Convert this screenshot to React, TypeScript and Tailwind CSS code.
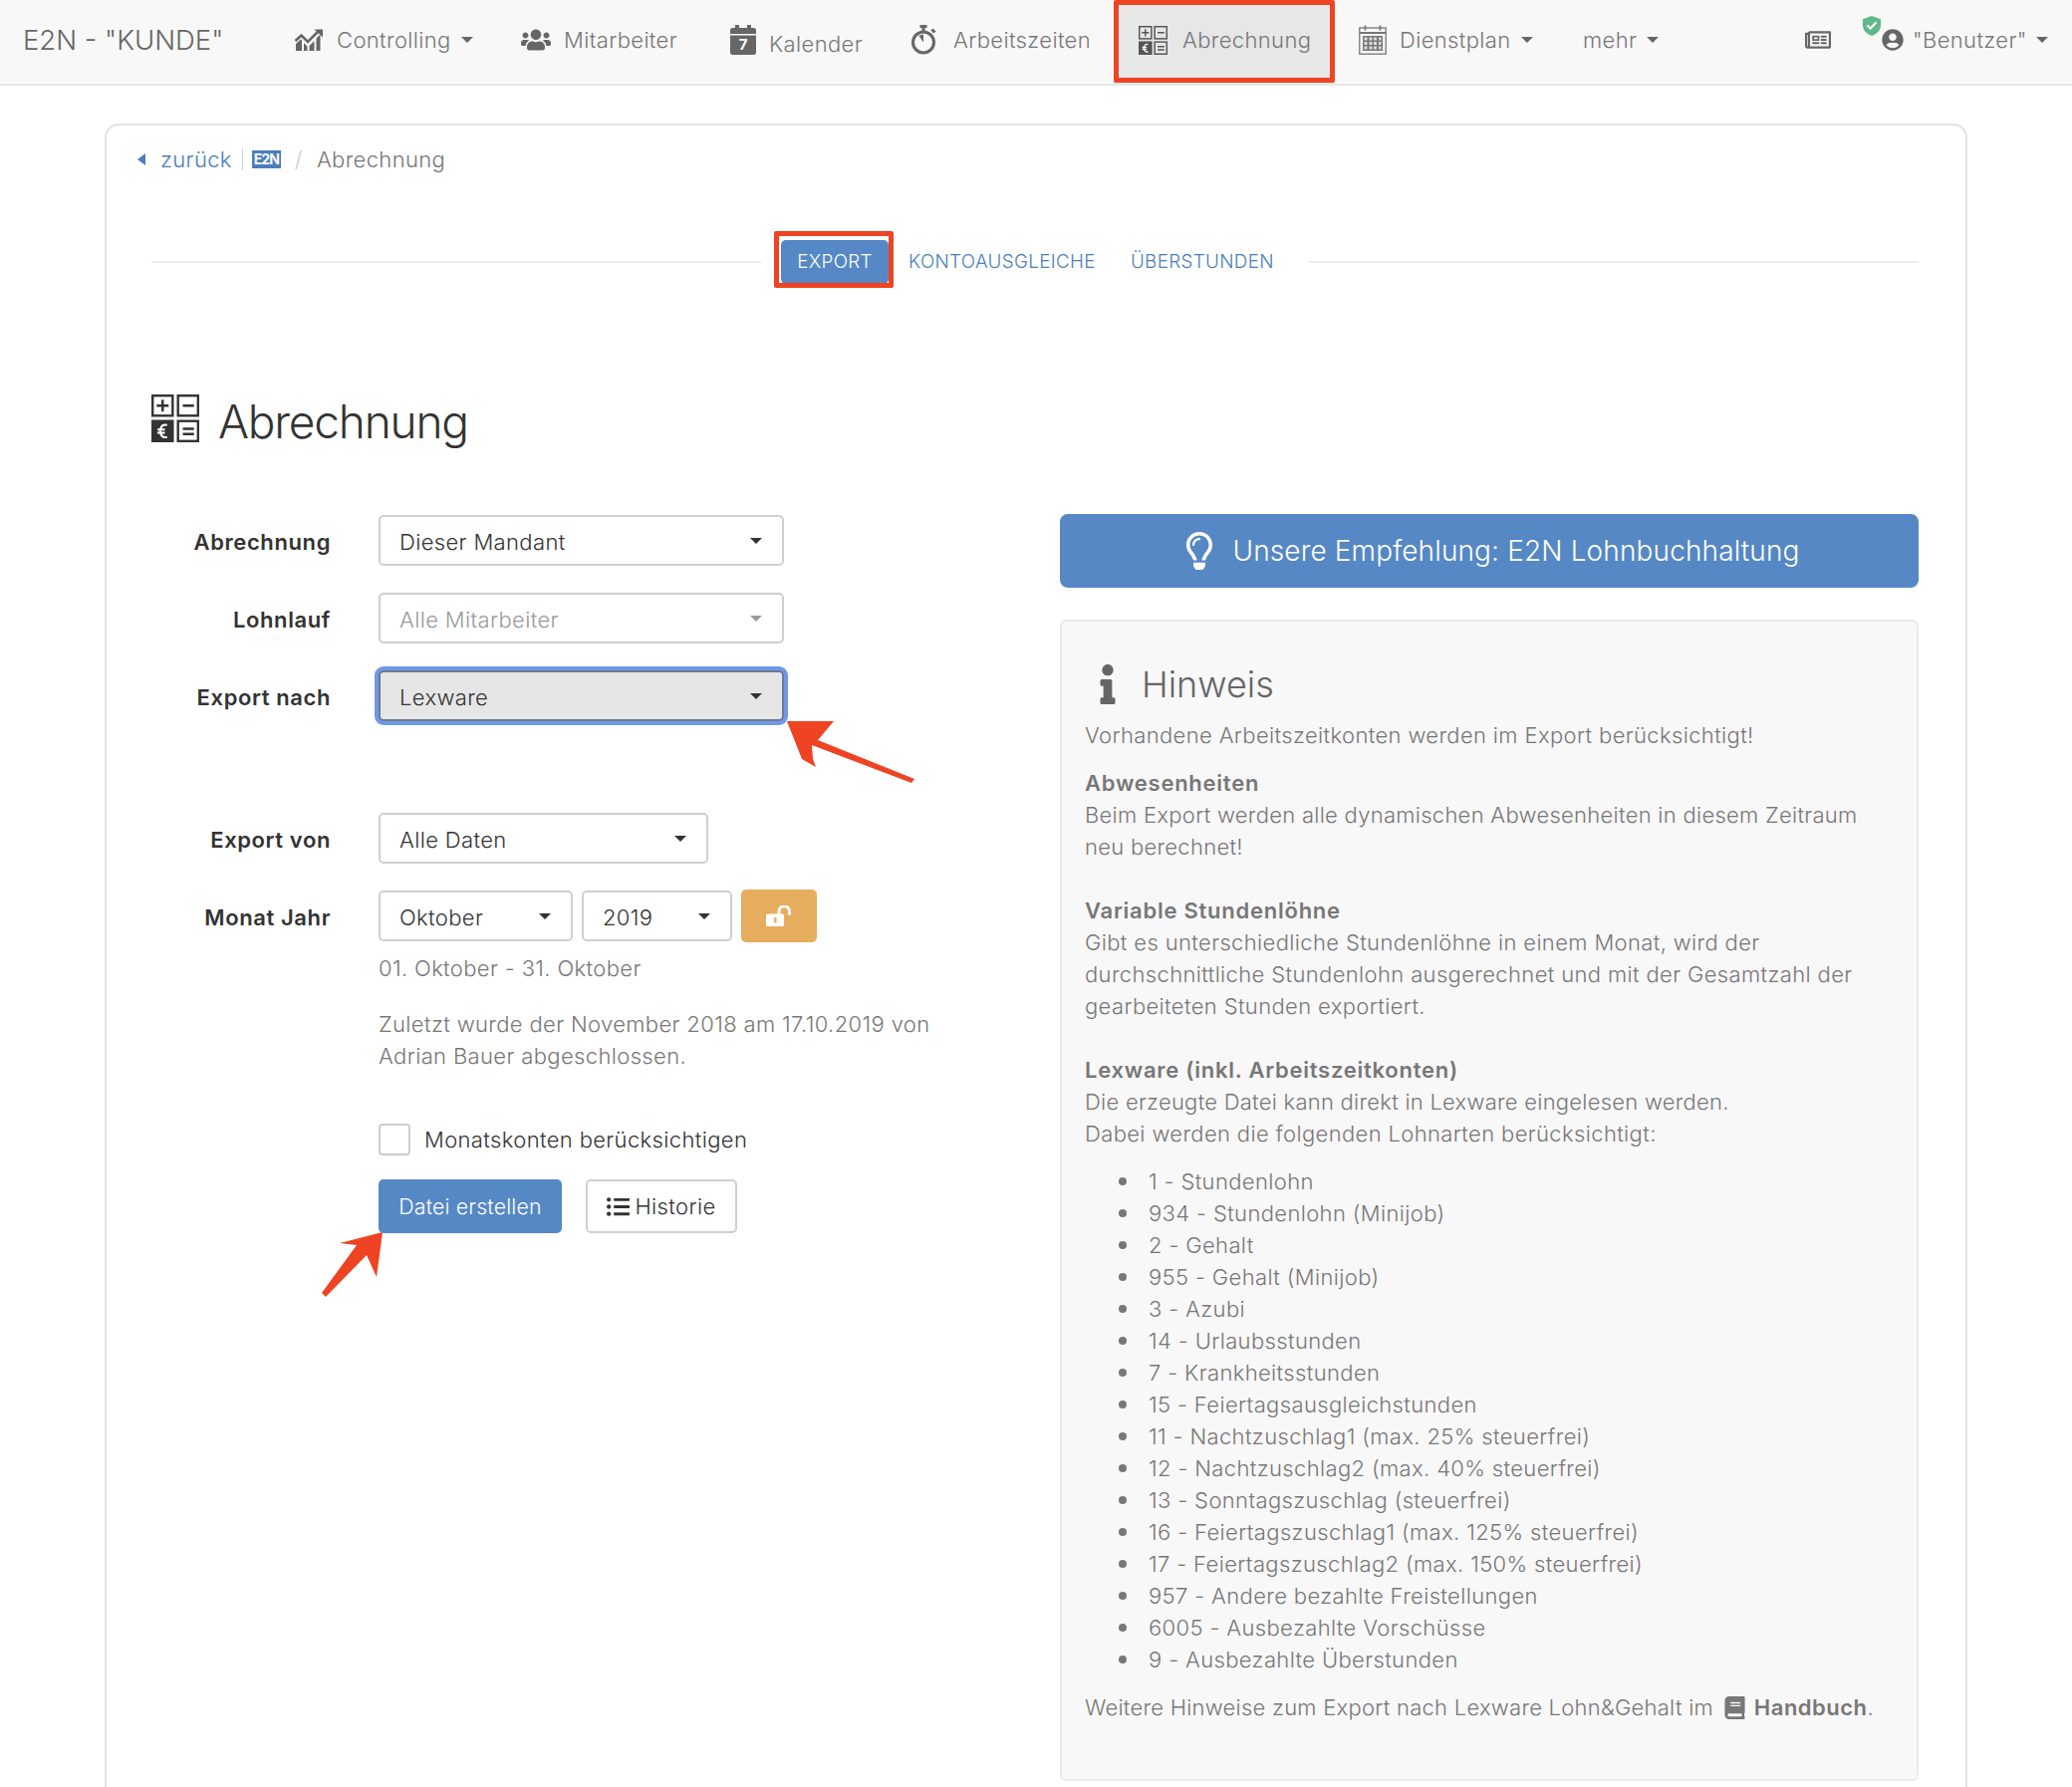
import React from "react";
import { FaUsers, FaRegNewspaper, FaUserCircle, FaRegLightbulb, FaInfo, FaBook, FaListUl } from "react-icons/fa";

const Caret = ({ c = "border-t-[#666]", s = "" }: { c?: string; s?: string }) => (
  <span className={`inline-block w-0 h-0 border-x-[6px] border-x-transparent border-t-[6px] ${c} ${s}`} />
);

const CalcIcon = ({ size, color = "#555" }: { size: number; color?: string }) => (
  <svg width={size} height={size} viewBox="0 0 32 32" fill="none">
    <g stroke={color} strokeWidth="1.6">
      <rect x="0.8" y="0.8" width="13.4" height="13.4" />
      <rect x="17.8" y="0.8" width="13.4" height="13.4" />
      <rect x="17.8" y="17.8" width="13.4" height="13.4" />
    </g>
    <rect x="0" y="17" width="15" height="15" fill={color} />
    <path d="M7.5 3.500v8M3.500 7.500h8M21 7.500h7.500M21 23h7.500M21 26.500h7.500" stroke={color} strokeWidth="1.6" />
    <path d="M10.500 20.500c-2.800-.8-4.600 1-4.600 4s1.800 4.800 4.600 4M4 23.500h5M4 25.700h5" stroke="#fff" strokeWidth="1.4" fill="none" />
  </svg>
);

const ChartIcon = () => (
  <svg width="30" height="30" viewBox="0 0 30 30" fill="#666">
    <path d="M2 26V19l5-4.500 1 1V26zM10 26V18l3.500 3.500V26zM15.500 26v-5l5-5V26zM22.500 26V13.500l4-4V26z" />
    <path d="M1.500 16 7.500 10.500 14 17 24.500 6.500" stroke="#666" strokeWidth="2.6" fill="none" />
    <path d="M20.500 4.500H29V12.500z" />
  </svg>
);

const CalendarSeven = () => (
  <span className="relative block w-[26px] h-[30px]">
    <svg width="26" height="30" viewBox="0 0 26 30" fill="#666" className="block">
      <rect x="0" y="3" width="26" height="27" rx="2.500" />
      <rect x="5" y="0" width="4" height="6" />
      <rect x="17" y="0" width="4" height="6" />
      <rect x="0" y="9" width="26" height="1.500" fill="#f8f8f8" />
    </svg>
    <span className="absolute left-0 right-0 top-[11px] text-center text-[15px] leading-[17px] font-bold text-white tracking-normal">7</span>
  </span>
);

const StopwatchIcon = () => (
  <svg width="25" height="30" viewBox="0 0 25 30" fill="none" stroke="#666">
    <circle cx="12" cy="17.500" r="10.500" strokeWidth="3" />
    <path d="M12 17.500V9.500A8 8 0 0 0 7.500 11z" fill="#666" stroke="none" />
    <path d="M8.500 1.500h7M12 1.500v5" strokeWidth="3" />
    <path d="m20.500 4.500 3 3" strokeWidth="3" />
  </svg>
);

const GridCalendarIcon = () => (
  <svg width="28" height="30" viewBox="0 0 28 30" fill="none" stroke="#777" strokeWidth="1.300">
    <rect x="0.800" y="3" width="26.400" height="26.200" />
    <path d="M0.800 8h26.400M6.500 0.500v5M21.500 0.500v5" strokeWidth="1.800" />
    <rect x="4" y="11" width="20" height="15" fill="#777" stroke="none" />
    <path d="M5.500 12.500h3v3h-3zM10.500 12.500h3v3h-3zM15 12.500h3v3h-3zM20 12.500h2.500v3H20zM5.500 17h3v3h-3zM10.500 17h3v3h-3zM15 17h3v3h-3zM20 17h2.500v3H20zM5.500 21.500h3v3h-3zM10.500 21.500h3v3h-3zM15 21.500h3v3h-3zM20 21.500h2.500v3H20z" fill="#ddd" stroke="none" />
  </svg>
);

const ShieldIcon = () => (
  <svg width="18" height="20" viewBox="0 0 18 20">
    <path d="M9 0 18 3.200v6.300c0 5-3.800 8.500-9 10.500C3.800 18 0 14.500 0 9.500V3.200z" fill="#5fb98a" />
    <path d="m4.500 9.500 3.200 3 5.800-6" stroke="#fff" strokeWidth="2.200" fill="none" />
  </svg>
);

const OpenLockIcon = () => (
  <svg width="26" height="21" viewBox="0 0 26 21">
    <rect x="0" y="8.500" width="18" height="12.500" rx="1.500" fill="#fff" />
    <rect x="8" y="12" width="2.500" height="5.500" rx="1" fill="#e5ad5d" />
    <path d="M13 9V6a5 5 0 0 1 10.500 0v3.500" stroke="#fff" strokeWidth="3" fill="none" />
  </svg>
);

const NavItem = ({ icon, label, caret, w, textY = "", gap = "gap-[13px]" }: { icon?: React.ReactNode; label: string; caret?: boolean; w: string; textY?: string; gap?: string }) => (
  <div className={`flex items-center ${gap} ${w} shrink-0`}>
    {icon}
    <span className={`flex items-center gap-[10px] ${textY}`}>
      {label}
      {caret && <Caret />}
    </span>
  </div>
);

const Select = ({ label, w, dim, focus }: { label: string; w: string; dim?: boolean; focus?: boolean }) => (
  <div
    className={`${w} h-[51px] rounded-[5px] border-2 flex items-center justify-between pl-[19px] pr-[20px] shrink-0 ${
      focus
        ? "bg-[#e6e6e6] border-[#6d7a91] text-[#333] shadow-[0_0_0_4px_#7097e8]"
        : dim
          ? "bg-white border-[#cfcfcf] text-[#9a9a9a]"
          : "bg-white border-[#cfcfcf] text-[#333]"
    }`}
  >
    <span className="pt-[2px]">{label}</span>
    <Caret c={dim ? "border-t-[#999]" : "border-t-[#333]"} />
  </div>
);

const FormRow = ({ label, children, mb }: { label: string; children: React.ReactNode; mb: string }) => (
  <div className={`flex items-center ${mb}`}>
    <div className="w-[228px] shrink-0 pt-[2px] text-right font-semibold text-[#333] tracking-[0.6px]">{label}</div>
    <div className="ml-[48px] flex items-center">{children}</div>
  </div>
);

const items = [
  "1 - Stundenlohn",
  "934 - Stundenlohn (Minijob)",
  "2 - Gehalt",
  "955 - Gehalt (Minijob)",
  "3 - Azubi",
  "14 - Urlaubsstunden",
  "7 - Krankheitsstunden",
  "15 - Feiertagsausgleichstunden",
  "11 - Nachtzuschlag1 (max. 25% steuerfrei)",
  "12 - Nachtzuschlag2 (max. 40% steuerfrei)",
  "13 - Sonntagszuschlag (steuerfrei)",
  "16 - Feiertagszuschlag1 (max. 125% steuerfrei)",
  "17 - Feiertagszuschlag2 (max. 150% steuerfrei)",
  "957 - Andere bezahlte Freistellungen",
  "6005 - Ausbezahlte Vorschüsse",
  "9 - Ausbezahlte Überstunden",
];

export default function App() {
  return (
    <div className="relative h-[1794px] overflow-hidden bg-white font-['Inter','Liberation_Sans',sans-serif] text-[22px] leading-[32px] tracking-[0.36px] font-light text-[#777]">
      {/* navbar */}
      <header className="h-[86px] pb-[4px] bg-[#f8f8f8] border-b-2 border-[#e7e7e7] flex items-center">
        <div className="w-[295px] shrink-0 pl-[23px] text-[27.5px] tracking-normal text-[#666]">E2N - "KUNDE"</div>
        <NavItem w="w-[228px]" icon={<ChartIcon />} label="Controlling" caret />
        <NavItem w="w-[210px]" icon={<FaUsers size={30} color="#666" />} label="Mitarbeiter" />
        <NavItem w="w-[180px]" icon={<CalendarSeven />} label="Kalender" textY="mt-[7px]" />
        <div className="pl-[2px] shrink-0"><NavItem w="w-[203px]" icon={<StopwatchIcon />} label="Arbeitszeiten" gap="gap-[17px]" /></div>
        <div className="w-[222px] shrink-0 self-start h-[84px] bg-[#e7e7e7] flex items-center gap-[15px] pl-[25px] pb-[4px]">
          <CalcIcon size={29} />
          <span>Abrechnung</span>
        </div>
        <div className="w-[24px] shrink-0" />
        <NavItem w="w-[225px]" icon={<GridCalendarIcon />} label="Dienstplan" caret />
        <div className="w-[223px] shrink-0 flex items-center gap-[10px]">
          mehr
          <Caret />
        </div>
        <div className="w-[58px] shrink-0"><FaRegNewspaper size={26} color="#666" /></div>
        <div className="relative ml-[19px] flex items-center gap-[9px]">
          <span className="absolute -left-[19px] -top-[8px]"><ShieldIcon /></span>
          <FaUserCircle size={22} color="#666" />
          <span>"Benutzer"</span>
          <Caret />
        </div>
      </header>

      {/* card */}
      <main className="mx-[105px] mt-[38px] h-[1800px] rounded-[14px] border-2 border-[#e3e3e3] px-[45px]">
        {/* breadcrumb */}
        <div className="flex items-center h-[32px] mt-[18px] -ml-[14px]">
          <span className="w-0 h-0 border-y-[6px] border-y-transparent border-r-[8px] border-r-[#4a7ebb] mr-[15px]" />
          <span className="text-[#4a7ebb]">zurück</span>
          <span className="ml-[10px] mr-[9px] h-[22px] w-px bg-[#cfcfcf]" />
          <span className="w-[29px] h-[18px] bg-[#4a7ebb] text-white text-[14px] leading-[18px] font-bold text-center tracking-[-1px] overflow-hidden">E2N</span>
          <span className="mx-[14px] text-[#ccc]">/</span>
          <span>Abrechnung</span>
        </div>

        {/* tabs */}
        <div className="flex items-center mt-[65px] mr-[2px] h-[44px] text-[18.8px] text-[#4a7ebb]">
          <div className="w-[612px] h-[2px] bg-[#eee]" />
          <div className="ml-[20px] w-[108px] h-[44px] rounded-[5px] bg-[#5588c4] text-white flex items-center justify-center">EXPORT</div>
          <div className="ml-[20px]">KONTOAUSGLEICHE</div>
          <div className="ml-[35px]">ÜBERSTUNDEN</div>
          <div className="ml-[35px] flex-1 h-[2px] bg-[#eee]" />
        </div>

        {/* title */}
        <div className="flex items-center gap-[19px] mt-[111px] h-[54px]">
          <div className="-mt-[7px]"><CalcIcon size={48} color="#333" /></div>
          <h1 className="text-[46px] leading-[54px] tracking-[-1.2px] font-light text-[#333]">Abrechnung</h1>
        </div>

        {/* columns */}
        <div className="flex mt-[67px] items-start">
          {/* form */}
          <div className="w-[912px] shrink-0">
            <div className="ml-[-48px]">
              <FormRow label="Abrechnung" mb="mb-[27px]"><Select w="w-[407px]" label="Dieser Mandant" /></FormRow>
              <FormRow label="Lohnlauf" mb="mb-[27px]"><Select w="w-[407px]" label="Alle Mitarbeiter" dim /></FormRow>
              <FormRow label="Export nach" mb="mb-[92px]"><Select w="w-[407px]" label="Lexware" focus /></FormRow>
              <FormRow label="Export von" mb="mb-[26px]"><Select w="w-[331px]" label="Alle Daten" /></FormRow>
              <FormRow label="Monat Jahr" mb="mb-[10px]">
                <Select w="w-[195px]" label="Oktober" />
                <div className="ml-[9px]"><Select w="w-[151px]" label="2019" /></div>
                <div className="ml-[9px] w-[76px] h-[53px] rounded-[5px] bg-[#e5ad5d] flex items-center justify-center"><OpenLockIcon /></div>
              </FormRow>
              <div className="ml-[276px]">
                <p>01. Oktober - 31. Oktober</p>
                <p className="mt-[24px] w-[570px]">Zuletzt wurde der November 2018 am 17.10.2019 von Adrian Bauer abgeschlossen.</p>
                <div className="flex items-center gap-[14px] mt-[52px] h-[32px] text-[#333]">
                  <span className="w-[32px] h-[32px] rounded-[4px] border-2 border-[#ccc] bg-white" />
                  Monatskonten berücksichtigen
                </div>
                <div className="flex mt-[24px] gap-[24px]">
                  <div className="w-[184px] h-[54px] rounded-[5px] bg-[#5588c4] text-white text-[21.33px] tracking-[0.15px] flex items-center justify-center">Datei erstellen</div>
                  <div className="w-[152px] h-[54px] rounded-[5px] border-2 border-[#d0d0d0] text-[#333] flex items-center justify-center gap-[5px]"><FaListUl size={23} />Historie</div>
                </div>
              </div>
            </div>
          </div>

          {/* right */}
          <div className="w-[862px] shrink-0 -mt-[1px]">
            <div className="h-[74px] rounded-[8px] bg-[#5588c4] text-white text-[28px] tracking-[0.13px] flex items-center justify-center gap-[14px]">
              <FaRegLightbulb size={38} color="#fff" className="ml-[2px]" />
              Unsere Empfehlung: E2N Lohnbuchhaltung
            </div>
            <section className="mt-[32px] h-[1166px] rounded-[6px] border-2 border-[#e9e9e9] bg-[#f8f8f8] px-[23px]">
              <div className="flex items-center mt-[38px] h-[50px] text-[36px] tracking-normal text-[#666] gap-[14px] ml-[3px]">
                <FaInfo size={40} color="#666" />
                Hinweis
              </div>
              <p className="mt-[10px]">Vorhandene Arbeitszeitkonten werden im Export berücksichtigt!</p>
              <p className="mt-[16px]"><b className="font-semibold tracking-[0.75px]">Abwesenheiten</b><br /><span className="tracking-[0.28px]">Beim Export werden alle dynamischen Abwesenheiten in diesem Zeitraum neu berechnet!</span></p>
              <p className="mt-[32px]"><b className="font-semibold tracking-[0.75px]">Variable Stundenlöhne</b><br />Gibt es unterschiedliche Stundenlöhne in einem Monat, wird der durchschnittliche Stundenlohn ausgerechnet und mit der Gesamtzahl der gearbeiteten Stunden exportiert.</p>
              <p className="mt-[32px]"><b className="font-semibold tracking-[0.75px]">Lexware (inkl. Arbeitszeitkonten)</b><br /><span className="tracking-[0.25px]">Die erzeugte Datei kann direkt in Lexware eingelesen werden.</span><br />Dabei werden die folgenden Lohnarten berücksichtigt:</p>
              <ul className="mt-[16px] pl-[34px]">
                {items.map((t) => (
                  <li key={t} className="flex items-center">
                    <span className="w-[8px] h-[8px] rounded-full bg-[#777] mr-[22px] shrink-0" />
                    {t}
                  </li>
                ))}
              </ul>
              <p className="mt-[16px] whitespace-nowrap tracking-[0.25px]">Weitere Hinweise zum Export nach Lexware Lohn&amp;Gehalt im <FaBook size={23} className="inline ml-[4px] mr-[1px] -mt-[4px]" /> <b className="font-semibold tracking-[0.5px]">Handbuch</b>.</p>
            </section>
          </div>
        </div>
      </main>

      {/* annotations */}
      <div className="absolute left-[1118px] top-0 w-[222px] h-[83px] border-[5px] border-[#ee4423] rounded-[2px] pointer-events-none" />
      <div className="absolute left-[777px] top-[232px] w-[120px] h-[57px] border-[5px] border-[#ee4423] rounded-[2px] pointer-events-none" />
      <svg className="absolute left-0 top-0 pointer-events-none" width="2080" height="1794" fill="#ee4423">
        <path d="M790 724 837 724 821 743 918 782 915 786 815 748 816 762 819 770 805 762z" />
        <path d="M384 1237 378 1282 368 1260 327 1302 323 1298 358 1250 341 1248z" />
      </svg>
    </div>
  );
}
